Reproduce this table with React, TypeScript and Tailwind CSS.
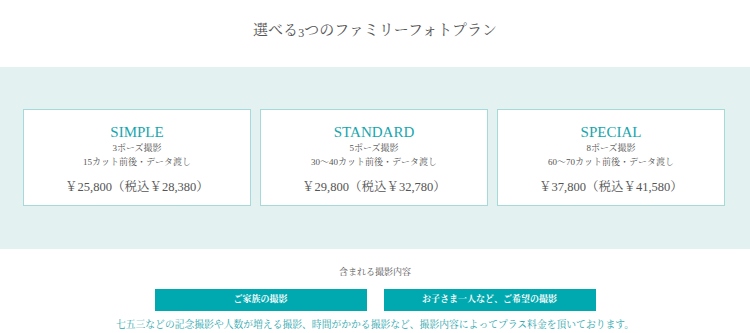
const serif = "font-['Liberation_Serif','Noto_Serif_CJK_JP','Noto_Sans_CJK_JP',serif]";

const plans = [
  { name: 'SIMPLE', poses: '3ポーズ撮影', cuts: '15カット前後・データ渡し', price: '￥25,800（税込￥28,380）' },
  { name: 'STANDARD', poses: '5ポーズ撮影', cuts: '30〜40カット前後・データ渡し', price: '￥29,800（税込￥32,780）' },
  { name: 'SPECIAL', poses: '8ポーズ撮影', cuts: '60〜70カット前後・データ渡し', price: '￥37,800（税込￥41,580）' },
];

function PlanCard({ plan }: { plan: (typeof plans)[number] }) {
  return (
    <div className="flex-1 h-[97px] bg-white border border-[#a6d9da] flex flex-col items-center pt-[14px]">
      <div className="text-[15px] leading-[16px] text-[#17a6ae]">{plan.name}</div>
      <div className="text-[9px] leading-[14px] text-[#555] mt-[1px]">{plan.poses}</div>
      <div className="text-[9px] leading-[15px] text-[#555]">{plan.cuts}</div>
      <div className="text-[12.5px] leading-[18px] text-[#555] mt-[8px]">{plan.price}</div>
    </div>
  );
}

export default function App() {
  return (
    <div className={`w-[750px] h-[333px] bg-white overflow-hidden ${serif}`}>
      {/* Heading */}
      <div className="h-[67px] flex justify-center pt-[22px]">
        <h2 className="text-[15px] leading-[16px] text-[#555]">
          選べる<span className="text-[12px] relative top-[2px]">3</span>つのファミリーフォトプラン
        </h2>
      </div>

      {/* Plans band */}
      <div className="h-[182px] bg-[#e3f1f1] pt-[42px] pl-[23px] pr-[25px] flex gap-[9px]">
        {plans.map((plan) => (
          <PlanCard key={plan.name} plan={plan} />
        ))}
      </div>

      {/* Included shots */}
      <div className="flex flex-col items-center">
        <div className="mt-[16px] text-[9px] leading-[14px] text-[#555]">含まれる撮影内容</div>
        <div className="mt-[10px] flex gap-[17px]">
          <div className="w-[212px] h-[22px] bg-[#00a9b0] text-white text-[9px] font-bold flex items-center justify-center">
            ご家族の撮影
          </div>
          <div className="w-[212px] h-[22px] bg-[#00a9b0] text-white text-[9px] font-bold flex items-center justify-center">
            お子さま一人など、ご希望の撮影
          </div>
        </div>
        <p className="mt-[7px] text-[9.8px] leading-[14px] text-[#2ba6ad]">
          七五三などの記念撮影や人数が増える撮影、時間がかかる撮影など、撮影内容によってプラス料金を頂いております。
        </p>
      </div>
    </div>
  );
}
